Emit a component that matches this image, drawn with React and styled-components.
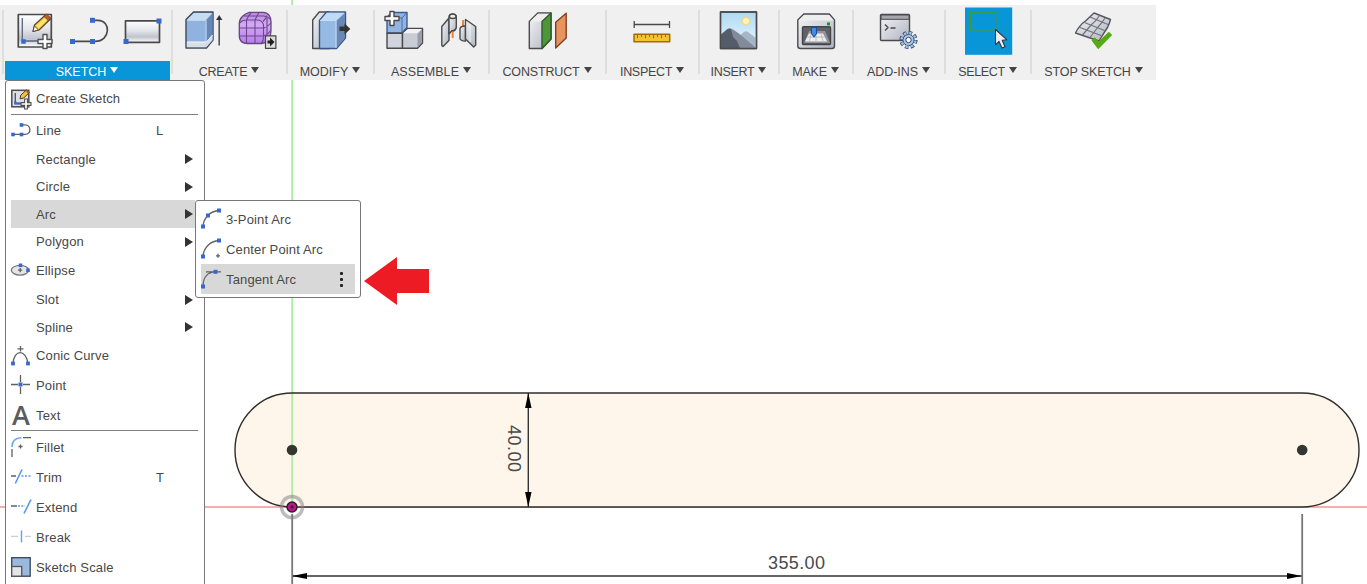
import React from "react";
import styled, { createGlobalStyle } from "styled-components";

const Global = createGlobalStyle`
  body { margin: 0; background: #fff; }
  * { box-sizing: border-box; }
`;

const Workspace = styled.main`
  position: relative;
  width: 1367px;
  height: 584px;
  overflow: hidden;
  background: #fff;
  color: #484848;
  font-family: "Liberation Sans", Arial, sans-serif;
  font-size: 13px;
`;

const Canvas = styled.svg`
  position: absolute;
  inset: 0;
  display: block;
`;

const Toolbar = styled.nav`
  position: relative;
  display: flex;
  width: 1156px;
  height: 75px;
  margin-top: 5px;
  padding-left: 2px;
  background: #f0f0f0;
`;

const Separator = styled.span`
  flex: none;
  width: 2px;
  height: 64px;
  margin-top: 5px;
  background: #dedede;
`;

const ToolGroup = styled.section`
  flex: none;
  display: flex;
  flex-direction: column;
  width: ${(p) => p.$width}px;
`;

const IconRow = styled.div`
  display: flex;
  gap: 14px;
  height: 56px;
  padding-left: ${(p) => p.$lead}px;
`;

const GroupLabel = styled.div`
  display: flex;
  align-items: center;
  justify-content: center;
  gap: 4px;
  height: 19px;
  margin: ${(p) => (p.$active ? "0 1px" : "0")};
  padding: 2px 1px 0 0;
  white-space: nowrap;
  letter-spacing: ${(p) => p.$spacing ?? 0}px;
  font-size: 12.5px;
  color: ${(p) => (p.$active ? "#fff" : "#444")};
  background: ${(p) => (p.$active ? "#0896d8" : "transparent")};
`;

const Caret = styled.span`
  border: 4px solid transparent;
  border-top: 6px solid currentColor;
  border-bottom: 0;
  margin-top: -4px;
`;

const Glyph = styled.svg`
  flex: none;
  display: block;
  overflow: visible;
`;

const Menu = styled.div`
  position: absolute;
  left: 5px;
  top: 80px;
  width: 200px;
  height: 520px;
  padding: 2px 5px 0;
  background: #fff;
  border: 1px solid #777;
  border-radius: 3px;
`;

const Submenu = styled(Menu)`
  left: 195px;
  top: 200px;
  width: 166px;
  height: 98px;
  padding: 3px 5px;
`;

const MenuRow = styled.div`
  display: flex;
  align-items: center;
  height: ${(p) => p.$height}px;
  margin-right: ${(p) => (p.$flush ? 0 : 4)}px;
  background: ${(p) => (p.$active ? "#d8d8d8" : "transparent")};
`;

const IconSlot = styled.span`
  flex: none;
  display: flex;
  width: 25px;
  height: 20px;
`;

const RowText = styled.span`
  flex: 1;
  white-space: nowrap;
  letter-spacing: 0.14px;
`;

const Shortcut = styled.span`
  width: 39px;
`;

const Chevron = styled.span`
  width: 0;
  margin-right: 2px;
  border: 5.5px solid transparent;
  border-left: 8px solid #333;
  border-right: 0;
`;

const Rule = styled.hr`
  height: ${(p) => p.$space}px;
  margin: 0 1px 0 0;
  border: 0;
  border-top: 1px solid #808080;
`;

const Dots = styled.span`
  display: flex;
  flex-direction: column;
  gap: 3px;
  margin-right: 12px;
  &::before, &::after, & > i {
    content: "";
    width: 3px;
    height: 3px;
    border-radius: 1px;
    background: #222;
  }
`;

const Pointer = styled.svg`
  position: absolute;
  left: 364px;
  top: 257px;
`;

const LetterIcon = styled.text`
  font-family: "Open Sans", sans-serif;
  font-size: 27px;
  font-weight: 600;
  fill: #5c5c5c;
  stroke: none;
`;

const Dimension = styled.text`
  font-family: "Liberation Sans", Arial, sans-serif;
  font-size: 18px;
  fill: #4a4a4a;
`;

const BLUE = "#3768cc";

function Tool({ x, width = 40, children }) {
  return (
    <Glyph width={width} height="56" viewBox={`${x} 5 ${width} 56`} fill="none" stroke="#4a4a4c" strokeWidth="1.4" strokeLinejoin="round">
      {children}
    </Glyph>
  );
}

function Dot({ x, y, s = 5 }) {
  return <rect x={x - s / 2} y={y - s / 2} width={s} height={s} fill={BLUE} stroke="none" />;
}

const PLUS = "M-2 -7h4v5h5v4h-5v5h-4v-5h-5v-4h5z";

function SketchArt() {
  return (
    <>
      <rect x="18.3" y="14.5" width="33" height="32.5" fill="url(#steel)" strokeWidth="1.7" />
      <path d="M22.3 18v23h22" stroke="#56657c" strokeWidth="1.3" />
      <Dot x={23.5} y={41.5} s={4.5} />
      <path d="M33 31.5l1.5-6.5L46 14.5l4.5 4.5L39 30z" fill="#f4c430" stroke="#5a4630" strokeWidth="1.2" />
      <path d="M36 25.5l3 3L49 18l-2-2z" fill="#ffe36b" stroke="none" />
      <path d="M44 16.5l2.7-2.4 4 3.8-2.5 2.6z" fill="#b65b32" stroke="#74432d" strokeWidth=".8" />
      <path d="M33 31.5l1.4-5.5 4 3.8z" fill="#fff" stroke="#5a4630" strokeWidth=".9" />
      <path d={PLUS} transform="translate(45 41.5)" fill="#fff" stroke="#505050" strokeWidth="1.4" />
    </>
  );
}

function SmallSketchArt() {
  return (
    <>
      <rect x=".8" y="1.300" width="17" height="16.500" fill="#dcdfe5" stroke="#4b4b4d" strokeWidth="1.500" />
      <path d="M4.300 4v10.500h7" stroke="#3d516f" strokeWidth="1.300" />
      <path d="M4.300 12v2.500h5" stroke={BLUE} strokeWidth="2" />
      <path d="M9 9.800l.8-3.600L15.500 .8l2.800 2.800-5.800 5.500z" fill="#f4c430" stroke="#4a3a2a" strokeWidth="1" />
      <path d="M14.300 2l1.400-1.300 2.600 2.600L17 4.600z" fill="#b65b32" stroke="none" />
      <path d="M-1.400 -5h2.800v3.600H5v2.800H1.400V5h-2.800V1.400H-5v-2.800h3.600z" transform="translate(15 15)" fill="#fff" stroke="#505050" strokeWidth="1.100" />
    </>
  );
}

function LineArt() {
  return (
    <>
      <path d="M72.500 41.300H95c16 0 16-21 3-21h-5" strokeWidth="1.700" />
      <Dot x={72.500} y={41.500} />
      <Dot x={92.500} y={41.500} />
      <Dot x={92.500} y={20.300} />
    </>
  );
}

function FormArt() {
  return (
    <>
      <path d="M239.300 24q0-4.500 3-7.500t7-4.200h14q4 .3 6 3.200 1.700 2.500 1.700 6v9q0 5.500-2.500 9t-7 4h-14q-4.500 0-6.500-2.500t-1.700-5.500z" fill="url(#violet)" stroke="#64477f" strokeWidth="1.300" />
      <path d="M240 23q2-3 7-3h10q5 0 6.500 4.500V37q0 4-2 6M263 21.500q3-3 4-6M239.500 28h24q4-1 7.500-5M239.500 36h24q4-1 7-5.500M246.500 20v23M255 20v23.500M246.500 20q1.500-4.500 5-7.500M255 20q2-4.500 4-7.500M244 16h20q3 .5 6.500 3M267 18v22" stroke="#70478e" strokeWidth="1.100" />
      <rect x="265.500" y="35.800" width="10.400" height="12.500" fill="#ddd" stroke="#444" strokeWidth="1.200" />
      <path d="M267.500 40.500h2.500v-3l4.500 4.500-4.500 4.500v-3h-2.500z" fill="#222" stroke="none" />
    </>
  );
}

function JointArt() {
  return (
    <>
      <path d="M452.700 30v8M463 20v8" stroke="#f08432" strokeWidth="2" />
      <path d="M441.800 26.500L449 18v22.500l-6 6-1.200-1z" fill="url(#metal)" />
      <path d="M449 17.500q0-3.500 3.700-3.500t3.600 3.500v10q-1 4-4.500 3.200L449 34z" fill="url(#metal)" />
      <ellipse cx="452.700" cy="16.300" rx="3.300" ry="2.200" fill="#eee" />
      <path d="M460 28.500q1-3 5.500-2.500V41q-4 .5-5.500-2z" fill="url(#metal)" />
      <path d="M465.500 19.500l10.200 7v18.500l-2 2-8.200-8z" fill="url(#metal)" />
      <path d="M470 24v18" stroke="#fff" strokeWidth="1" opacity=".7" />
    </>
  );
}

function PrinterArt() {
  return (
    <>
      <path d="M797.800 20l6-6h25.500l5.200 6v26q0 2.500-2.500 2.500h-31.500q-2.700 0-2.700-2.500z" fill="url(#metal)" stroke="#4b4b4f" />
      <path d="M798.500 20.500l5.700-5.500H829l5 5.500z" fill="#eee" stroke="none" />
      <rect x="802.500" y="26.800" width="28" height="17.700" rx="1" fill="#606269" stroke="#454547" />
      <path d="M804 43l5-12h16l5 12z" fill="#92949a" stroke="none" />
      <path d="M805 41.500l4-8h14l4 8z" fill="#eee" stroke="none" />
      <path d="M807.500 37h17M811 34l-1.500 7M816 34v7M821 34l2 7" stroke="#aaa" strokeWidth=".7" />
      <path d="M811.500 27.500h5v6L814 37l-2.500-3.500z" fill="#448ee5" stroke="#174eaa" strokeWidth="1.100" />
      <rect x="827" y="22.500" width="3" height="2.800" fill="#129326" stroke="none" />
    </>
  );
}

function AddInsArt() {
  return (
    <>
      <rect x="880.500" y="14.500" width="29" height="26" rx="1" fill="url(#metal)" />
      <rect x="881" y="15" width="28" height="4.300" fill="#a5a7ad" strokeWidth="1" />
      <path d="M885 24.500l3 3-3 3M890.500 28h5" strokeWidth="1.400" />
      <circle cx="908.500" cy="40" r="7.300" stroke="#344c70" strokeWidth="3.600" strokeDasharray="3.400 2.330" />
      <circle cx="908.500" cy="40" r="5.600" fill="#a9c5e8" stroke="#344c70" strokeWidth="1" />
      <circle cx="908.500" cy="40" r="7" stroke="#a9c5e8" strokeWidth="2.400" strokeDasharray="2.200 3.298" strokeDashoffset="-.6" />
      <circle cx="908.500" cy="40" r="2.700" fill="#fff" stroke="#344c70" strokeWidth="1" />
    </>
  );
}

function StopArt() {
  return (
    <>
      <path d="M1094 13l16.500 6.500q-1 4-3 8-4 6-8.500 13.500l-23.500-8q4-8 10-12z" fill="url(#metal)" stroke="#57575b" />
      <path d="M1090 17l18 7.500M1084.500 22.500l20 8M1080 27.500l21 8M1099.500 15.500q-3 5-8 9l-9 10.500M1105 18q-3 5-7 9l-8 10.500" strokeWidth="1.200" stroke="#737378" />
      <path d="M1091.500 40.500l3.300-3.200 3.700 4.200 10.300-9.800 3.400 3.300-14 14.300z" fill="#56aa13" stroke="none" />
    </>
  );
}

const groups = [
  {
    name: "SKETCH", width: 167, lead: 10, active: true,
    art: (
      <>
        <Tool x={14}><SketchArt /></Tool>
        <Tool x={68}><LineArt /></Tool>
        <Tool x={122}>
          <rect x="125.500" y="20.800" width="34" height="21.500" fill="url(#steel)" strokeWidth="1.700" />
          <Dot x={159} y={21} />
          <Dot x={126} y={41.500} />
        </Tool>
      </>
    ),
  },
  {
    name: "CREATE", width: 113, lead: 10, spacing: -0.2,
    art: (
      <>
        <Tool x={183}>
          <path d="M186 19.500l7.500-7.500H213v28l-6.500 8H186z" fill="#8fb2de" stroke="#3e4757" />
          <path d="M186.800 20h19l6.500-7H194z" fill="#c5dcf3" stroke="none" />
          <path d="M206.500 20l6-6.500v27l-6 6.500z" fill="#6688b8" stroke="none" />
          <path d="M186.800 42h19.700l6-7v5l-6.300 7.300h-19.400z" fill="#d8dde6" stroke="none" />
          <path d="M187 20.500h19V47" stroke="#bed6f0" strokeWidth="1" />
          <path d="M187 42h19.500l6-7" stroke="#f5f8fc" strokeWidth="1" />
          <path d="M219.200 45.500V17" strokeWidth="1.500" />
          <path d="M216 20l3.200-5 3.200 5z" fill="#333" stroke="none" />
        </Tool>
        <Tool x={237}><FormArt /></Tool>
      </>
    ),
  },
  {
    name: "MODIFY", width: 85, lead: 22,
    art: (
      <Tool x={310}>
        <path d="M312.700 20l6.500-8h10v36.500h-16.500z" fill="url(#metal)" />
        <path d="M319.500 20.500l7-8.500h19v26l-9 10.500h-17z" fill="#97bae5" stroke="#3c5680" />
        <path d="M320.200 20.500h16l8.500-7.800H327z" fill="#bfdbf5" stroke="none" />
        <path d="M336.500 21l8.500-8v25l-8.500 10z" fill="#6987b6" stroke="none" />
        <path d="M320 20.500h16V48" stroke="#c5def7" strokeWidth="1" />
        <path d="M339.500 26.500h5v-3.300l5.800 5.700-5.800 5.500V31h-5z" fill="#333" stroke="none" />
      </Tool>
    ),
  },
  {
    name: "ASSEMBLE", width: 113, lead: 9, spacing: 0.1,
    art: (
      <>
        <Tool x={384}>
          <path d="M387 17l5-4.500h15v15l-5 5.500h-15z" fill="#91b4e1" stroke="#3c5d91" />
          <path d="M387 18h15l5-5.500M402 18v15" stroke="#476ca6" strokeWidth="1" />
          <path d="M387 33.200h15.500v15H387z" fill="#d1d4dc" />
          <path d="M402.500 33.200l5-4.700h15v14.500l-5 5.200h-15z" fill="#c8ccd5" />
          <path d="M403 33.300l5-4.200h14l-5 4.200z" fill="#f3f3f6" stroke="none" />
          <path d="M417.500 34v13.500l4.300-5V29.500z" fill="#9b9ea9" stroke="none" />
          <path d={PLUS} transform="translate(392 18.500)" fill="#fff" strokeWidth="1.400" />
        </Tool>
        <Tool x={438}><JointArt /></Tool>
      </>
    ),
  },
  {
    name: "CONSTRUCT", width: 115, lead: 37, spacing: -0.15,
    art: (
      <Tool x={527}>
        <path d="M529.300 21.500l8.500-8.500H551v26l-9 9.500h-12.700z" fill="url(#metal)" />
        <path d="M530 21.500l8-7.800h12l-8 7.800z" fill="#eee" stroke="none" />
        <path d="M542 21.500l9-8.500v26l-9 9.500z" fill="#4f9639" stroke="#315a2c" />
        <path d="M555.700 22.300l10.500-9V38l-10.500 10z" fill="#e9935f" stroke="#80401f" />
      </Tool>
    ),
  },
  {
    name: "INSPECT", width: 91, lead: 24, spacing: -0.3,
    art: (
      <Tool x={631}>
        <path d="M634.200 21v7M669.500 21v7M634 24.500h35.500" strokeWidth="1.300" />
        <rect x="634" y="34.300" width="35.700" height="7.400" fill="#f2c52f" stroke="#a96712" strokeWidth="1.500" />
        <path d="M637.500 35v3.200m4-3.200v2m4-2v3.200m4-3.200v2m4-2v3.200m4-3.200v2m4-2v3.200m4-3.200v2" stroke="#845813" strokeWidth=".9" />
      </Tool>
    ),
  },
  {
    name: "INSERT", width: 78, lead: 18, spacing: -0.3,
    art: (
      <Tool x={718}>
        <rect x="720.500" y="12" width="36" height="36.500" fill="url(#sky)" />
        <circle cx="746" cy="21" r="3.700" fill="#fff7bd" stroke="#f7d77d" />
        <path d="M721 40l16-2 7-6q2-1.500 4 0l8 6v10h-35z" fill="#a5b6c6" stroke="none" />
        <path d="M721 34.500l6-5q3-2 6 0l6 4 17 14.500h-35z" fill="#838b9a" stroke="none" />
        <path d="M721 34.500l6-5q2-1.500 4-.5l2 8 4 4 3 7h-19z" fill="#555c69" stroke="none" />
        <rect x="720.500" y="12" width="36" height="36.500" />
      </Tool>
    ),
  },
  { name: "MAKE", width: 72, lead: 16, spacing: -0.2, art: <Tool x={796}><PrinterArt /></Tool> },
  { name: "ADD-INS", width: 90, lead: 24, spacing: -0.05, art: <Tool x={878}><AddInsArt /></Tool> },
  {
    name: "SELECT", width: 84, lead: 19, spacing: -0.35,
    art: (
      <Tool x={965} width={48}>
        <rect x="965" y="7.500" width="47.200" height="47.300" fill="#0896d8" stroke="none" />
        <rect x="970.500" y="12" width="25.300" height="17.800" stroke="#469c25" strokeWidth="1.300" />
        <path d="M995.500 29.500v15.300l3.500-3.400 3 6.600 3-1.300-2.800-6.500 4.500-.5z" fill="#eceef2" stroke="#33363d" strokeWidth="1.100" />
      </Tool>
    ),
  },
  { name: "STOP SKETCH", width: 124, lead: 42, spacing: -0.12, art: <Tool x={1074}><StopArt /></Tool> },
];

/* Small icons use a 20 by 20 box, its centre on the row's centre line. */
const smallIcons = {
  create: <SmallSketchArt />,
  line: (
    <><path d="M2 14.300h12c7 0 6-9.500 0-9.500h-3" /><Dot x={2} y={14.500} s={3.600} /><Dot x={10.500} y={14.500} s={3.600} /><Dot x={10.500} y={5} s={3.600} /></>
  ),
  ellipse: (
    <><ellipse cx="9" cy="9.200" rx="8.700" ry="4.900" fill="#e3e5eb" stroke="#777" /><path d="M7 9.200h4.200M9.200 7v4.300" /><Dot x={9.500} y={4.300} s={3.600} /><Dot x={17} y={9.200} s={3.600} /></>
  ),
  conic: (
    <><path d="M2 17.500C3 3 15 3 17 17.500M6.500 2.800h6M9.500 0v5.600" /><Dot x={2} y={17.500} s={3.800} /><Dot x={17} y={17.500} s={3.800} /></>
  ),
  point: <><path d="M0 9.500h7M12 9.500h7M9.500 0v7M9.500 12v7" /><Dot x={9.500} y={9.500} s={4} /></>,
  text: <LetterIcon x="1" y="20">A</LetterIcon>,
  fillet: (
    <><path d="M1 10C1 4 4 .7 10.500.7" stroke="#69a6ed" strokeWidth="1.500" /><path d="M1 12v8M12 .7h8M7.500 9.500h4M9.500 7.500v4" /></>
  ),
  trim: (
    <><path d="M0 9h5" strokeWidth="1.500" /><path d="M4.300 16.500L11 2.500" stroke="#5598f0" strokeWidth="1.600" /><path d="M10.500 9H20" stroke="#5598f0" strokeDasharray="2 1.500" /></>
  ),
  extend: (
    <><path d="M0 9h6" strokeWidth="1.500" /><path d="M7 9h7" stroke="#5598f0" strokeDasharray="2 1.300" /><path d="M13 16.500L20 2.500" stroke="#5598f0" strokeWidth="1.600" /></>
  ),
  breakLine: <><path d="M0 9.300h7M14 9.300h6" stroke="#ccc" /><path d="M10.500 3.500v12" stroke="#69a6ed" strokeWidth="1.500" /></>,
  scale: (
    <><rect x=".700" y=".700" width="18.500" height="18.500" fill="#99b9df" stroke="#34445e" /><rect x=".700" y="9.500" width="10" height="9.700" fill="#e4e5e8" stroke="#555" /></>
  ),
  arc3: <><path d="M2 17.500C2.500 9 9 2 18 1.500" /><Dot x={2} y={17.500} s={4} /><Dot x={7} y={6.500} s={4} /><Dot x={18} y={1.500} s={4} /></>,
  arcCenter: <><path d="M2 17.500C2.500 9 9 2 18 1.500M15 16.800h4M17 14.800v4" /><Dot x={2} y={17.500} s={4} /><Dot x={18} y={1.500} s={4} /></>,
  arcTangent: <><path d="M2 17.500C2 9 6 3 14.500 2.800M5 2.800h15" /><Dot x={2} y={17.500} s={4} /><Dot x={14.500} y={2.800} s={4} /></>,
};

function SmallIcon({ name }) {
  return (
    <IconSlot>
      {name && (
        <Glyph width="20" height="20" viewBox="0 0 20 20" fill="none" stroke="#606060" strokeWidth="1.300">
          {smallIcons[name]}
        </Glyph>
      )}
    </IconSlot>
  );
}

const menuItems = [
  { text: "Create Sketch", icon: "create", height: 31 },
  { rule: 1 },
  { text: "Line", icon: "line", height: 30, shortcut: "L" },
  { text: "Rectangle", height: 28, more: true },
  { text: "Circle", height: 27, more: true },
  { text: "Arc", height: 28, more: true, active: true },
  { text: "Polygon", height: 27, more: true },
  { text: "Ellipse", icon: "ellipse", height: 31 },
  { text: "Slot", height: 27, more: true },
  { text: "Spline", height: 28, more: true },
  { text: "Conic Curve", icon: "conic", height: 29 },
  { text: "Point", icon: "point", height: 30 },
  { text: "Text", icon: "text", height: 30 },
  { rule: 2 },
  { text: "Fillet", icon: "fillet", height: 30 },
  { text: "Trim", icon: "trim", height: 30, shortcut: "T" },
  { text: "Extend", icon: "extend", height: 30 },
  { text: "Break", icon: "breakLine", height: 30 },
  { text: "Sketch Scale", icon: "scale", height: 30 },
];

function Drawing() {
  return (
    <Canvas width="1367" height="584" viewBox="0 0 1367 584" fill="none">
      <defs>
        <linearGradient id="steel" x1="0" y1="0" x2="0" y2="1"><stop stopColor="#fff" /><stop offset=".450" stopColor="#e3e5ea" /><stop offset=".750" stopColor="#bfc3cd" /><stop offset="1" stopColor="#fff" /></linearGradient>
        <linearGradient id="metal" x1="0" y1="0" x2="1" y2="1"><stop stopColor="#f4f5f7" /><stop offset="1" stopColor="#aeb3c0" /></linearGradient>
        <linearGradient id="violet" x1="0" y1="0" x2="0" y2="1"><stop stopColor="#b989e0" /><stop offset=".400" stopColor="#d2a9f4" /><stop offset="1" stopColor="#b57eeb" /></linearGradient>
        <linearGradient id="sky" x1="0" y1="0" x2="0" y2="1"><stop stopColor="#afd9f2" /><stop offset="1" stopColor="#ecf8ff" /></linearGradient>
      </defs>
      <path d="M0 507h1367" stroke="#f4b0b0" strokeWidth="2" />
      <path d="M292 393h1010a57 57 0 0 1 0 114H292a57 57 0 0 1 0-114z" fill="#fff6eb" />
      <path d="M292.200 0v507" stroke="#b0ecaa" strokeWidth="2" />
      <path d="M292 393h1010a57 57 0 0 1 0 114H292a57 57 0 0 1 0-114z" stroke="#302d2b" strokeWidth="1.400" />
      <circle cx="292" cy="450" r="5.300" fill="#343632" />
      <circle cx="1302.200" cy="450" r="5.300" fill="#343632" />
      <circle cx="292" cy="507" r="10.500" stroke="#888" strokeOpacity=".560" strokeWidth="3.600" />
      <circle cx="292" cy="507" r="5" fill="#b51885" stroke="#29202a" strokeWidth="1.400" />
      <circle cx="292" cy="507" r="1.500" fill="#38102d" />
      <path d="M528.300 393v114M292 576h1010" stroke="#333" strokeWidth="1.400" />
      <path d="M292.200 514v70M1302.200 514v70" stroke="#777" strokeWidth="1.800" />
      <path d="M528.300 393l3.200 15h-6.400zM528.300 507l3.200-15h-6.400zM292 576l15-3v6zM1302 576l-15-3v6z" fill="#000" />
      <Dimension x="768" y="569" textLength="57">355.00</Dimension>
      <Dimension transform="translate(508 425) rotate(90)" textLength="47">40.00</Dimension>
    </Canvas>
  );
}

export default function App() {
  return (
    <Workspace>
      <Global />
      <Drawing />
      <Toolbar>
        {groups.map((g) => (
          <React.Fragment key={g.name}>
            <Separator />
            <ToolGroup $width={g.width}>
              <IconRow $lead={g.lead}>{g.art}</IconRow>
              <GroupLabel $active={g.active} $spacing={g.spacing}>{g.name}<Caret /></GroupLabel>
            </ToolGroup>
          </React.Fragment>
        ))}
      </Toolbar>
      <Menu>
        {menuItems.map((item, i) =>
          item.rule ? (
            <Rule key={i} $space={item.rule} />
          ) : (
            <MenuRow key={item.text} $height={item.height} $active={item.active}>
              <SmallIcon name={item.icon} />
              <RowText>{item.text}</RowText>
              {item.shortcut && <Shortcut>{item.shortcut}</Shortcut>}
              {item.more && <Chevron />}
            </MenuRow>
          )
        )}
      </Menu>
      <Submenu>
        <MenuRow $height={30} $flush><SmallIcon name="arc3" /><RowText>3-Point Arc</RowText></MenuRow>
        <MenuRow $height={30} $flush><SmallIcon name="arcCenter" /><RowText>Center Point Arc</RowText></MenuRow>
        <MenuRow $height={30} $flush $active>
          <SmallIcon name="arcTangent" />
          <RowText>Tangent Arc</RowText>
          <Dots><i /></Dots>
        </MenuRow>
      </Submenu>
      <Pointer width="66" height="48" viewBox="0 0 66 48">
        <path d="M0 24L33 0v12h32v24H33v12z" fill="#ed1c24" />
      </Pointer>
    </Workspace>
  );
}
